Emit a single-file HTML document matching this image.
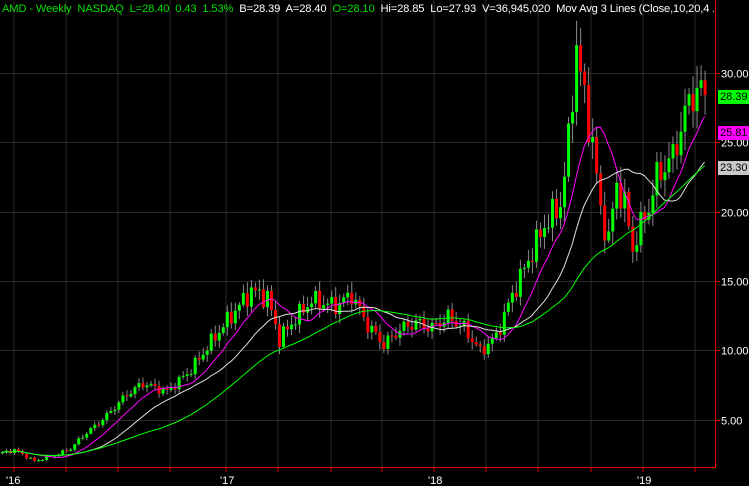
<!DOCTYPE html>
<html><head><meta charset="utf-8"><style>
html,body{margin:0;padding:0;background:#000;width:749px;height:486px;overflow:hidden}
svg{position:absolute;left:0;top:0}
text{font-family:"Liberation Sans",sans-serif;font-size:11px}
.lbl{position:absolute;font-family:"Liberation Sans",sans-serif;font-size:11px;height:14px;line-height:14px;padding:0 2px;color:#000}
#hdr{position:absolute;left:2px;top:3px;width:712px;overflow:hidden;font-family:"Liberation Sans",sans-serif;font-size:11.2px;letter-spacing:-0.15px;color:#fff;white-space:pre}
</style></head><body>
<svg id="s" width="749" height="486" xmlns="http://www.w3.org/2000/svg"></svg>
<div id="hdr"><span style="color:#00e000">AMD - Weekly  NASDAQ  L=28.40  0.43  1.53%</span>  B=28.39  A=28.40  <span style="color:#00e000">O=28.10</span>  Hi=28.85  Lo=27.93  V=36,945,020  Mov Avg 3 Lines (Close,10,20,4 ...</div>
<div class="lbl" style="left:718px;top:90px;background:#00ff00;width:27px">28.39</div>
<div class="lbl" style="left:718px;top:126px;background:#ff00ff;width:27px">25.81</div>
<div class="lbl" style="left:718px;top:161px;background:#c8c8c8;width:27px">23.30</div>
<script>
var s=document.getElementById('s'),h='';
function Y(p){return 73+(30-p)*13.86;}
function X(w){return 14+w*4.015;}
var vx=[14,66,118,170,226,278,331,382,434,486,538,591,643,695];
vx.forEach(function(x){h+='<line x1="'+x+'" y1="0" x2="'+x+'" y2="467" stroke="#2a2a2a"/>';h+='<line x1="'+x+'" y1="467" x2="'+x+'" y2="472" stroke="#e00000"/>';});
[30,25,20,15,10,5].forEach(function(p){var y=Math.round(Y(p))+.5;h+='<line x1="0" y1="'+y+'" x2="716" y2="'+y+'" stroke="#2a2a2a"/><line x1="716" y1="'+y+'" x2="720" y2="'+y+'" stroke="#e00000"/><text x="721" y="'+(y+4)+'" fill="#fff">'+p.toFixed(2)+'</text>';});
[['\'16',6],['\'17',220],['\'18',428],['\'19',637]].forEach(function(a){h+='<text x="'+a[1]+'" y="484" fill="#fff">'+a[0]+'</text>';});
var kp=[[-3,2.6],[0,2.8],[5,2.0],[10,2.4],[14,2.9],[17,3.8],[22,5.0],[28,6.8],[32,7.6],[38,7.0],[44,8.6],[50,11],[54,12.5],[59,14.3],[63,13.8],[66,10.8],[70,12.3],[74,13.6],[80,13.2],[84,14.0],[88,11.8],[92,10.4],[96,11.5],[100,12],[104,11.6],[108,12.4],[112,11.6],[116,9.9],[120,11],[124,14],[128,16.5],[132,19],[136,20.5],[138,25],[140,32],[142,28],[144,25],[146,20],[148,18],[150,22],[152,20.5],[154,17.3],[156,19],[158,20.3],[160,22.5],[164,24],[168,28],[170,28.8],[172,28.4]];
function tgt(w){for(var i=0;i<kp.length-1;i++){if(w>=kp[i][0]&&w<=kp[i+1][0]){var t=(w-kp[i][0])/(kp[i+1][0]-kp[i][0]);return kp[i][1]+t*(kp[i+1][1]-kp[i][1]);}}return 28.4;}
var cl=[],ws=[],prev=2.6;
for(var w=-3;w<=172;w++){
 var base=tgt(w);var n=(Math.sin(w*1.7)+Math.sin(w*3.1+1)*0.7)*0.035*base;
 var c=w==172?28.4:base+n;var o=prev;
 var hi=Math.max(o,c)+Math.abs(Math.sin(w*2.3))*0.04*base+0.015*base;
 var lo=Math.min(o,c)-Math.abs(Math.cos(w*1.9))*0.04*base-0.01*base;
 var x=X(w),col=c>=o?'#00ff00':'#ff0000';
 h+='<line x1="'+(x+.5)+'" y1="'+Y(hi)+'" x2="'+(x+.5)+'" y2="'+Y(lo)+'" stroke="#8a8a8a"/>';
 var y1=Y(Math.max(o,c)),y2=Y(Math.min(o,c));
 h+='<rect x="'+(x-1)+'" y="'+y1+'" width="3" height="'+Math.max(1,y2-y1)+'" fill="'+col+'"/>';
 cl.push(c);ws.push(w);prev=c;
}
function ma(n,color){var p='';for(var i=0;i<cl.length;i++){var a=0,k=0;for(var j=Math.max(0,i-n+1);j<=i;j++){a+=cl[j];k++;}p+=(i?'L':'M')+X(ws[i]).toFixed(1)+' '+Y(a/k).toFixed(1);}h+='<path d="'+p+'" fill="none" stroke="'+color+'" stroke-width="1"/>';}
ma(10,'#ff00ff');ma(20,'#e0e0e0');ma(40,'#00ff00');
h+='<line x1="715.5" y1="0" x2="715.5" y2="467" stroke="#e00000"/><line x1="0" y1="467.5" x2="716" y2="467.5" stroke="#e00000"/>';
s.innerHTML=h;
</script>
</body></html>
